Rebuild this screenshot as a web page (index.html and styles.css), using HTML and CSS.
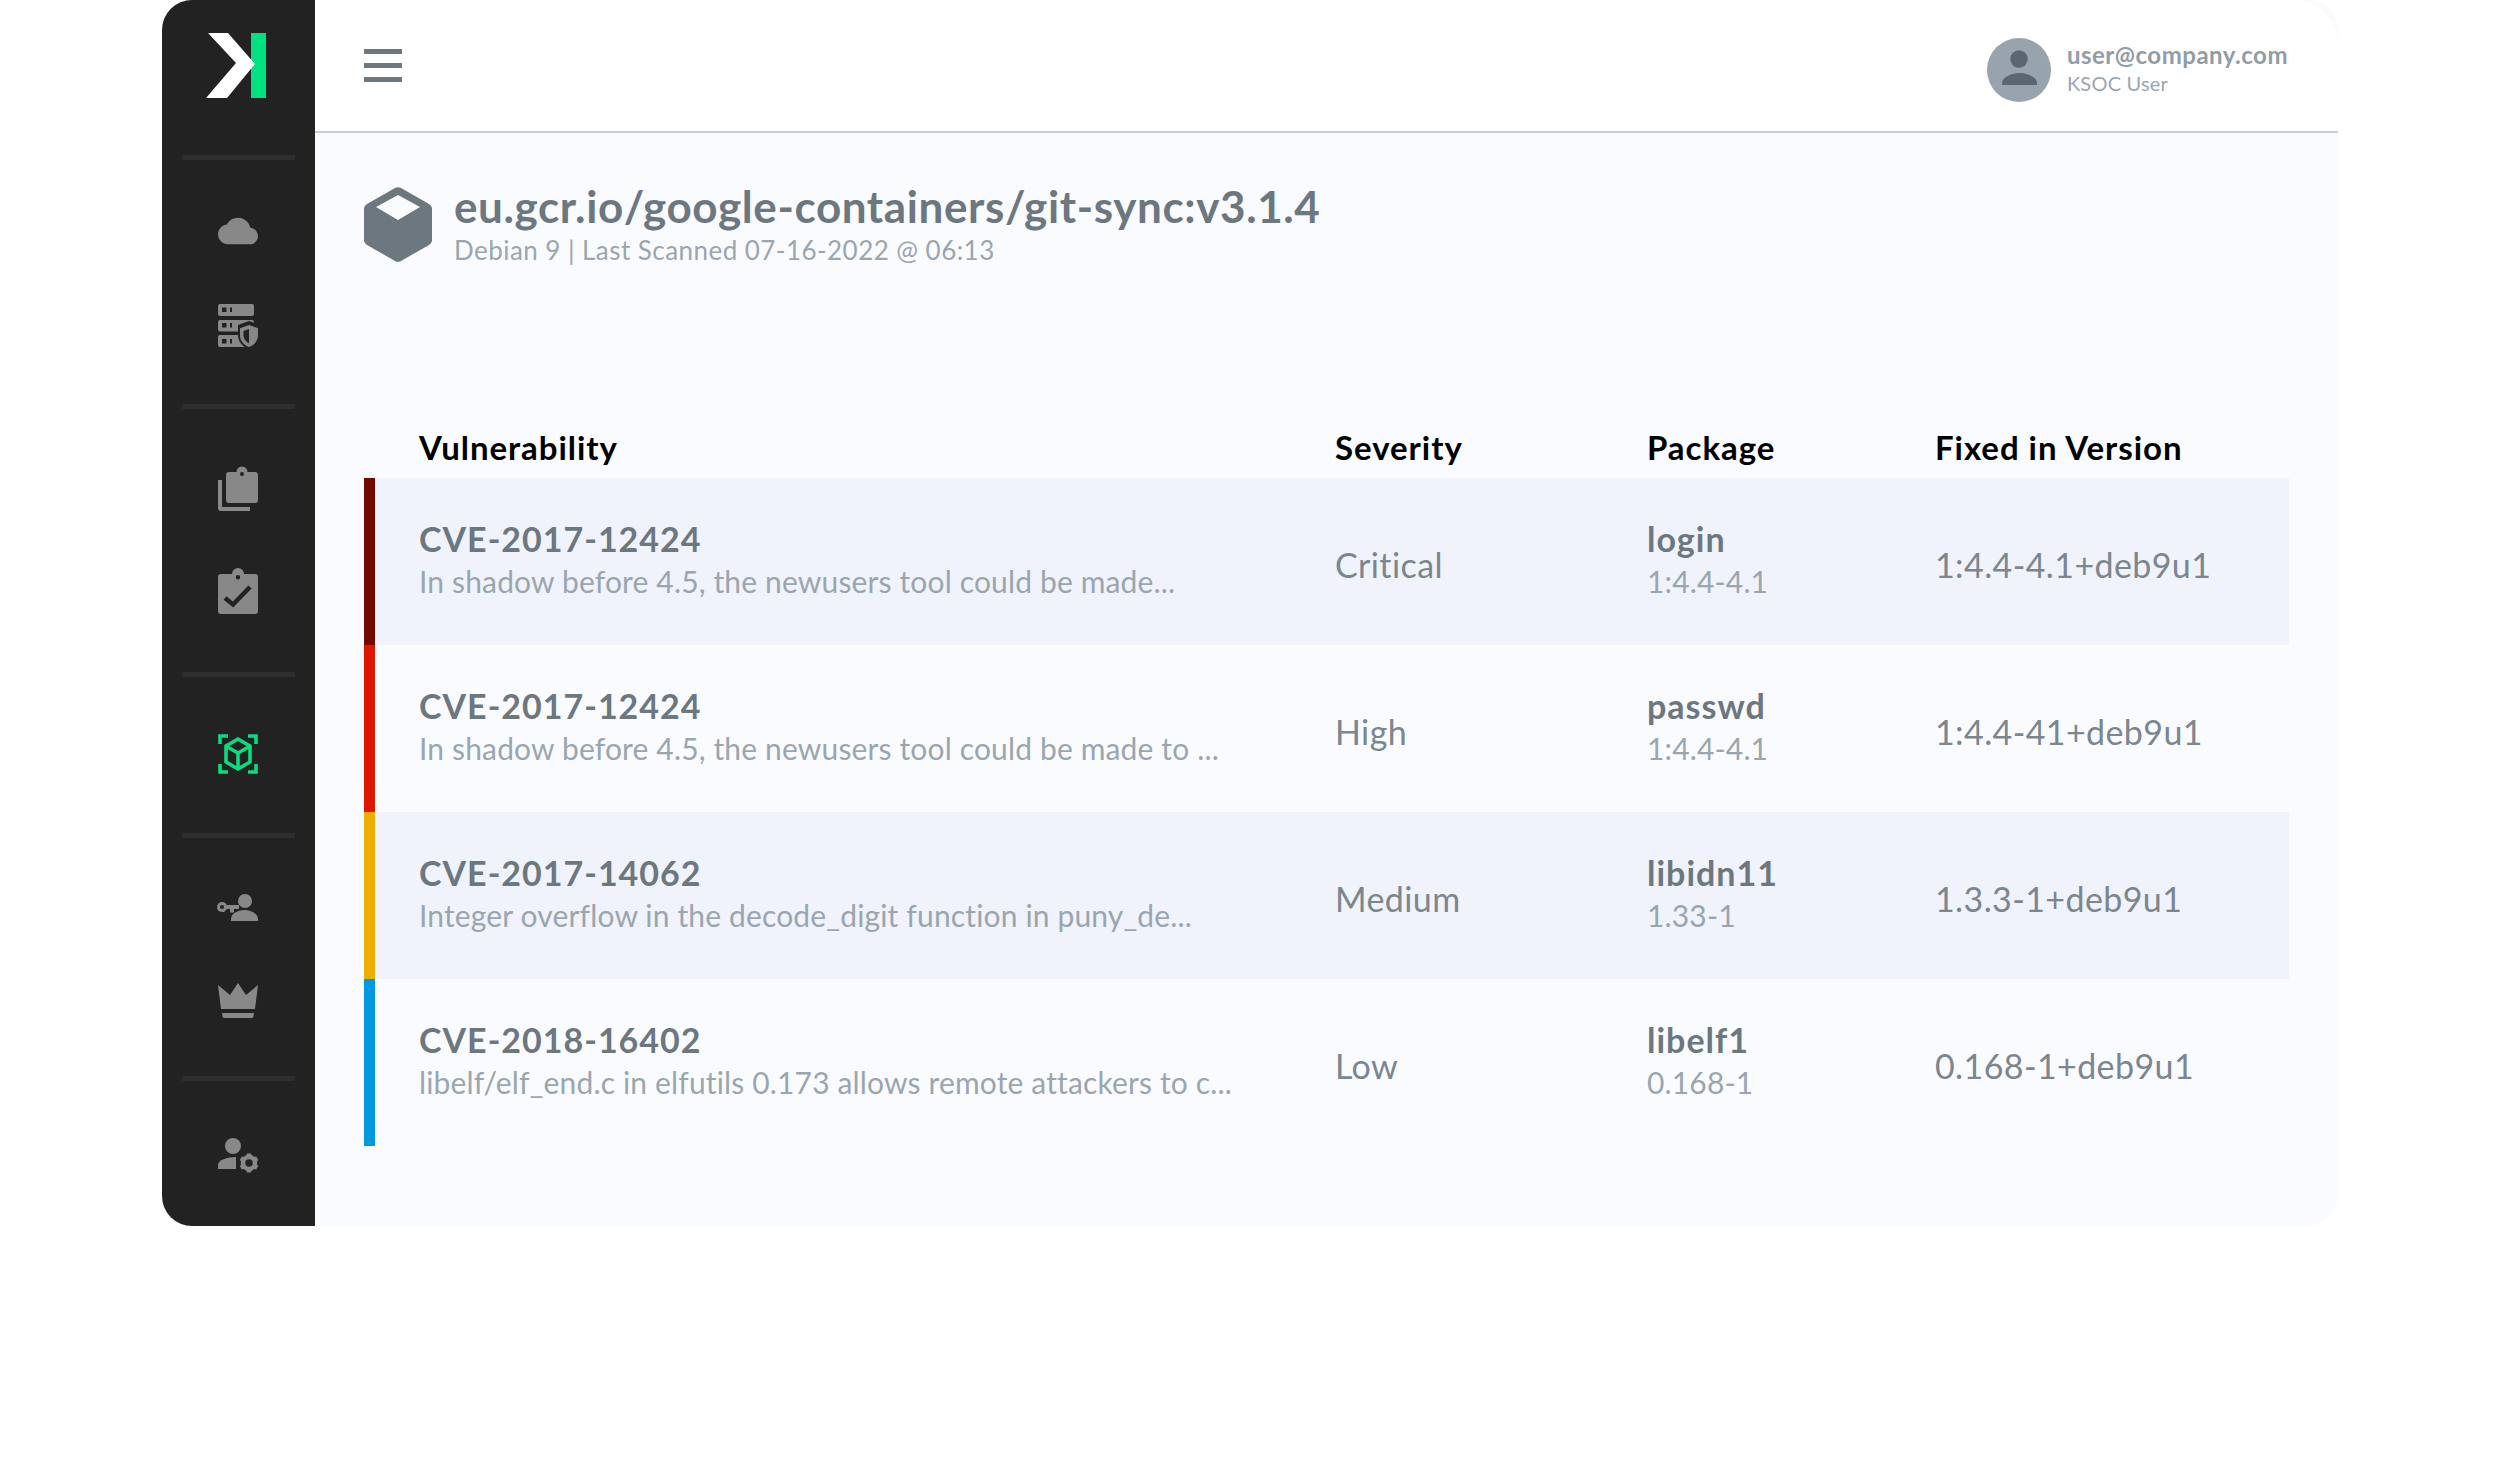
FILE: index.html
```html
<!DOCTYPE html>
<html lang="en">
<head>
<meta charset="utf-8">
<title>KSOC image vulnerabilities</title>
<link rel="stylesheet" href="styles.css">
</head>
<body>
<div class="frame">
  <aside class="sidebar">
    <div class="logo">
      <svg width="70" height="70" viewBox="0 0 70 70"><rect x="51" y="0" width="15" height="65" fill="#00e27f"/><path d="M8 0H28L55 31L27 65H6L36 30Z" fill="#fff"/></svg>
    </div>
    <div class="divider"></div>
    <div class="group g1">
      <svg class="icon" viewBox="0 0 24 24" style="width:40px;height:40px"><path d="M19.35 10.04C18.67 6.59 15.64 4 12 4 9.11 4 6.6 5.64 5.35 8.04 2.34 8.36 0 10.91 0 14c0 3.31 2.69 6 6 6h13c2.76 0 5-2.24 5-5 0-2.64-2.05-4.78-4.65-4.96z"/></svg>
      <svg class="icon" viewBox="0 0 48 48"><rect x="4" y="2" width="36" height="12" rx="2"/><rect x="4" y="18" width="36" height="11.500" rx="2"/><rect x="4" y="33" width="36" height="12" rx="2"/><path class="dk" d="M8 5.500h4.500V10H8zM16 5.500h2V10h-2zM8 21h4.500v4.500H8zM16 21h2v4.500h-2zM8 37h4.500v4.500H8zM16 37h2v4.500h-2z"/><path class="dk" d="M35 19l11 4v10c0 7-5 12-11 14-6-2-11-7-11-14V23z"/><path d="M35 23l9 3.300V33c0 6-4 10-9 12-5-2-9-6-9-12v-6.700z"/><path class="dk" d="M35 27l-5.500 2v4c0 4 2.500 6.800 5.500 8.300z"/></svg>
    </div>
    <div class="divider"></div>
    <div class="group g2">
      <svg class="icon" viewBox="0 0 48 48"><path d="M4 15h4v27h28v4H7a3 3 0 0 1-3-3z"/><path fill-rule="evenodd" d="M15 7h7.500a5.500 5.500 0 0 1 11 0H41a3 3 0 0 1 3 3v25a3 3 0 0 1-3 3H15a3 3 0 0 1-3-3V10a3 3 0 0 1 3-3zM28 7a2 2 0 1 0 0 4 2 2 0 0 0 0-4z"/></svg>
      <svg class="icon" viewBox="0 0 48 48"><path fill-rule="evenodd" d="M7 6h11a6 6 0 0 1 12 0h11a3 3 0 0 1 3 3v34a3 3 0 0 1-3 3H7a3 3 0 0 1-3-3V9a3 3 0 0 1 3-3zM24 7a2.200 2.200 0 1 0 0 4.400 2.200 2.200 0 0 0 0-4.400z"/><path class="chk" d="M11 30l8 6.500L36 19"/></svg>
    </div>
    <div class="divider"></div>
    <div class="group g3">
      <svg class="icon scan" viewBox="0 0 48 48"><path d="M14 6H6v8M34 6h8v8M14 42H6v-8M34 42h8v-8"/><path d="M24 9l12 7v16l-12 7-12-7V16zM12.500 16.500L24 23l11.500-6.500M24 23v16"/></svg>
    </div>
    <div class="divider"></div>
    <div class="group g4">
      <svg class="icon" viewBox="0 0 48 48"><circle cx="31" cy="17" r="7"/><path d="M17 37v-2c0-6 8-9 13.500-9S44 29 44 35v2z"/><path fill-rule="evenodd" d="M8 18a5 5 0 0 1 4.700 3H25v4h-5v3.500h-4V25h-3.300A5 5 0 1 1 8 18zm0 3a2 2 0 1 0 0 4 2 2 0 0 0 0-4z"/></svg>
      <svg class="icon" viewBox="0 0 48 48"><path d="M4 9L16 19 24 7 32 19 44 9 41 33H7z"/><path d="M8 37H40L39.500 40.500A2 2 0 0 1 37.500 42H10.500A2 2 0 0 1 8.500 40.500z"/></svg>
    </div>
    <div class="divider"></div>
    <div class="group g5">
      <svg class="icon" viewBox="0 0 48 48"><circle cx="19" cy="15" r="8"/><path d="M4 38v-4c0-5 9-8 18-8v12z"/><circle class="gear" cx="35" cy="32" r="6"/><path class="teeth" d="M35 22.500v19M26.800 27.300l16.400 9.500M26.800 36.800l16.400-9.500"/></svg>
    </div>
  </aside>
  <div class="content">
    <header class="topbar">
      <div class="burger"><span></span><span></span><span></span></div>
      <div class="user">
        <svg class="avatar" width="64" height="64" viewBox="0 0 64 64"><circle cx="32" cy="32" r="32" fill="#98a4ad"/><circle cx="32" cy="21" r="8.700" fill="#5c6670"/><path d="M15 47v-2c0-6 10-10 17.500-10S50 39 50 45v2z" fill="#5c6670"/></svg>
        <div class="user-text">
          <div class="user-mail">user@company.com</div>
          <div class="user-role">KSOC User</div>
        </div>
      </div>
    </header>
    <main class="main">
      <div class="title-row">
        <svg class="box" width="68" height="75" viewBox="0 0 68 75"><path fill-rule="evenodd" d="M31 1a6 6 0 0 1 6 0l28 16a6 6 0 0 1 3 4v33a6 6 0 0 1-3 4L37 74a6 6 0 0 1-6 0L3 58a6 6 0 0 1-3-4V21a6 6 0 0 1 3-4zM34 8L12 20 34 33 56 20z" fill="#6c7780"/></svg>
        <div>
          <h1 class="title">eu.gcr.io/google-containers/git-sync:v3.1.4</h1>
          <div class="subtitle">Debian 9 | Last Scanned 07-16-2022 @ 06:13</div>
        </div>
      </div>
      <div class="table">
        <div class="row head"><div>Vulnerability</div><div>Severity</div><div>Package</div><div>Fixed in Version</div></div>
        <div class="row item critical">
          <div><div class="name">CVE-2017-12424</div><div class="desc">In shadow before 4.5, the newusers tool could be made...</div></div>
          <div class="val">Critical</div>
          <div><div class="name">login</div><div class="desc">1:4.4-4.1</div></div>
          <div class="val">1:4.4-4.1+deb9u1</div>
        </div>
        <div class="row item high">
          <div><div class="name">CVE-2017-12424</div><div class="desc">In shadow before 4.5, the newusers tool could be made to ...</div></div>
          <div class="val">High</div>
          <div><div class="name">passwd</div><div class="desc">1:4.4-4.1</div></div>
          <div class="val">1:4.4-41+deb9u1</div>
        </div>
        <div class="row item medium">
          <div><div class="name">CVE-2017-14062</div><div class="desc">Integer overflow in the decode_digit function in puny_de...</div></div>
          <div class="val">Medium</div>
          <div><div class="name">libidn11</div><div class="desc">1.33-1</div></div>
          <div class="val">1.3.3-1+deb9u1</div>
        </div>
        <div class="row item low">
          <div><div class="name">CVE-2018-16402</div><div class="desc">libelf/elf_end.c in elfutils 0.173 allows remote attackers to c...</div></div>
          <div class="val">Low</div>
          <div><div class="name">libelf1</div><div class="desc">0.168-1</div></div>
          <div class="val">0.168-1+deb9u1</div>
        </div>
      </div>
    </main>
  </div>
</div>
</body>
</html>
```
FILE: styles.css
```css
* { box-sizing: border-box; }
html, body { margin: 0; padding: 0; background: #fff; }
body { font-family: "Lato", "Noto Sans", sans-serif; width: 2500px; height: 1460px; overflow: hidden; }

.frame { display: flex; width: 2176px; height: 1226px; margin-left: 162px; background: #fafbff; border-radius: 30px; overflow: hidden; }

.sidebar { width: 153px; flex: none; background: #222; display: flex; flex-direction: column; }
.logo { height: 155px; padding: 33px 0 0 38px; }
.logo svg { display: block; }
.divider { height: 5px; margin: 0 20px; flex: none; background: #2e2e2e; border-radius: 1px; }
.group { display: flex; flex-direction: column; align-items: center; flex: none; padding-right: 1px; }
.g1 { height: 244px; padding-top: 51px; gap: 55px; }
.g2 { height: 263px; padding-top: 60px; gap: 63px; }
.g3 { height: 156px; padding-top: 57px; }
.g4 { height: 238px; padding-top: 50px; gap: 52px; }
.g5 { padding-top: 54px; }
.icon { width: 40px; height: 40px; fill: #888; overflow: visible; }
.sidebar .icon[viewBox="0 0 48 48"] { width: 48px; height: 48px; margin: -4px 0; }
.icon .dk { fill: #222; }
.icon .chk { fill: none; stroke: #222; stroke-width: 4.500; }
.scan { fill: none; }
.scan path { fill: none; stroke: #0bdc7e; stroke-width: 3.600; }
.gear { fill: none; stroke: #888; stroke-width: 4.500; }
.teeth { fill: none; stroke: #888; stroke-width: 4.500; stroke-dasharray: 4.500 10 4.500; }

.content { flex: 1; display: flex; flex-direction: column; min-width: 0; }
.topbar { height: 133px; flex: none; background: #fff; border-bottom: 2px solid #c8ccd9; border-top-right-radius: 44px; display: flex; align-items: center; justify-content: space-between; padding: 0 50px 0 49px; }
.burger { display: flex; flex-direction: column; gap: 9px; width: 38px; margin-top: 0; }
.burger span { display: block; height: 5px; background: #6c7780; }
.user { display: flex; align-items: center; gap: 16px; margin-top: 9px; }
.avatar { display: block; }
.user-text { margin-top: -3px; }
.user-mail { font-size: 24px; font-weight: 700; line-height: 29px; letter-spacing: 0.5px; color: #919da6; }
.user-role { font-size: 20px; line-height: 29px; letter-spacing: 0.2px; color: #9aa6af; }

.main { flex: 1; padding: 54px 49px 0 49px; }
.title-row { display: flex; gap: 22px; height: 291px; }
.box { display: block; flex: none; }
.title { margin: -8px 0 0; font-size: 44px; font-weight: 700; line-height: 54px; letter-spacing: 0.6px; color: #6c7780; }
.subtitle { font-size: 26px; line-height: 35px; letter-spacing: 0.45px; color: #9aa6af; }

.row { display: grid; grid-template-columns: 916px 312px 288px 1fr; padding-left: 44px; border-left: 11px solid transparent; align-items: center; }
.head { height: 0; font-size: 33px; font-weight: 700; letter-spacing: 0.95px; color: #000; }
.head > div { transform: translateY(-51px); }
.item { height: 167px; }
.item:nth-child(even) { background: #f0f3fb; }
.critical { border-left-color: #730a00; }
.high { border-left-color: #de1700; }
.medium { border-left-color: #eeae00; }
.low { border-left-color: #0099e0; }
.name { font-size: 34px; font-weight: 700; line-height: 42px; letter-spacing: 1px; color: #6c7780; margin-top: -3px; }
.desc { font-size: 30px; line-height: 42px; letter-spacing: 0.15px; color: #9aa6af; }
.val { font-size: 34px; letter-spacing: 0.4px; color: #7b868f; padding-top: 5px; }
```
